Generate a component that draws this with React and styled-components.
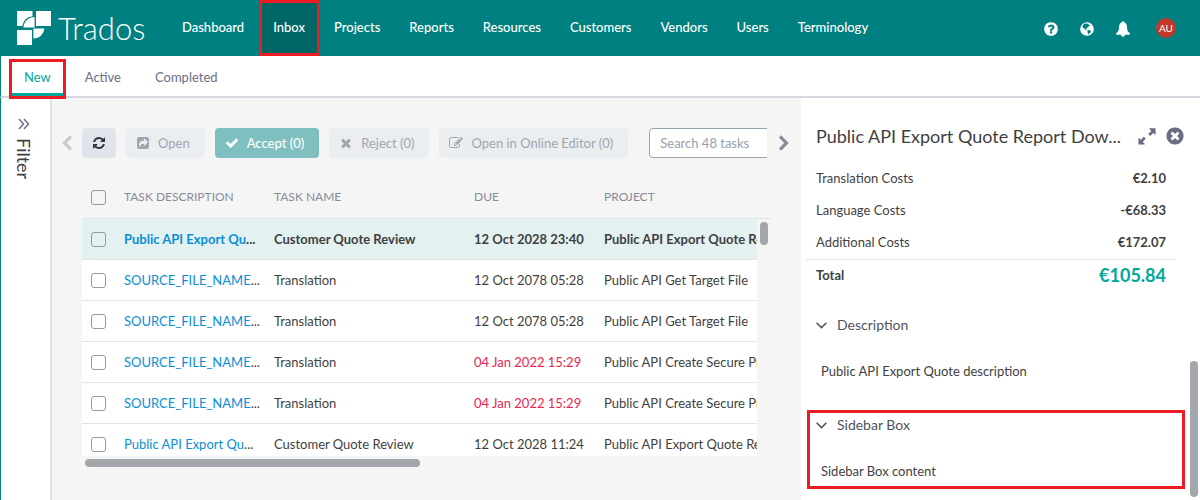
import React from "react";
import styled, { createGlobalStyle, css } from "styled-components";

const color = {
  teal: "#008080",
  tealDark: "#006666",
  accent: "#00a79d",
  mark: "#ed1c24",
  text: "#3f3f41",
  muted: "#6b6d85",
  head: "#868c99",
  line: "#dfe4e8",
  page: "#f5f5f5",
  thumb: "#a3a6aa",
  link: "#0a8fd6",
  late: "#e8264f",
};

const GlobalStyle = createGlobalStyle`
  *, *::before, *::after { box-sizing: border-box; }
  body {
    margin: 0;
    background: #fff;
    color: ${color.text};
    font: 13px/16px Lato, "Liberation Sans", sans-serif;
  }
  button, input { font: inherit; }
  button { margin: 0; padding: 0; border: 0; background: none; color: inherit; cursor: pointer; }
  a { text-decoration: none; }
`;

/* Red frame that calls out a part of the page */
const marked = css`
  position: relative;
  &::after {
    content: "";
    position: absolute;
    inset: ${(p) => p.$frame || "0"};
    border: 3px solid ${color.mark};
    pointer-events: none;
  }
`;

const Page = styled.div`
  display: flex;
  flex-direction: column;
  height: 100vh;
  min-height: 400px;
`;

const Header = styled.header`
  display: flex;
  flex: none;
  height: 56px;
  padding: 0 24px 0 17px;
  background: ${color.teal};
  color: #fff;
`;

const Brand = styled.a`
  display: flex;
  align-items: center;
  gap: 7px;
  width: 151px;
  padding-bottom: 1px;
  color: #fff;
  font-size: 31px;
  font-weight: 300;
  line-height: 32px;
`;

const MainNav = styled.nav`
  display: flex;
  flex: 1;
`;

const NavLink = styled.a`
  display: flex;
  align-items: center;
  padding: 0 15px 2px 14px;
  color: #fff;
  font-weight: 500;
  background: ${(p) => (p.$active ? color.tealDark : "none")};
  ${(p) => p.$active && marked}
`;

const HeaderTools = styled.div`
  display: flex;
  align-items: center;
  gap: 20px;
`;

const IconButton = styled.button`
  display: flex;
  flex: none;
  align-items: center;
  justify-content: center;
  color: ${(p) => p.$color || "inherit"};
`;

const ToolIcon = styled(IconButton)`
  padding-top: 2px;
`;

const Avatar = styled.button`
  width: 20px;
  height: 20px;
  margin-left: 5px;
  border-radius: 50%;
  background: #c0392b;
  color: #fff;
  font-size: 10px;
  line-height: 20px;
`;

const SubNav = styled.nav`
  display: flex;
  flex: none;
  gap: 10px;
  height: 42px;
  padding-left: 11px;
  border-left: 1px solid ${color.teal};
  border-bottom: 2px solid #d6d6de;
`;

const Tab = styled.a`
  display: flex;
  align-items: center;
  padding: 5px 12px 0;
  color: ${(p) => (p.$active ? color.accent : color.muted)};
  border-bottom: 3px solid ${(p) => (p.$active ? color.accent : "transparent")};
  ${(p) => p.$active && marked}
`;

const Body = styled.div`
  display: flex;
  flex: 1;
  min-height: 0;
  border-left: 1px solid ${color.teal};
`;

const FilterRail = styled.aside`
  display: flex;
  flex: none;
  flex-direction: column;
  align-items: center;
  gap: 8px;
  width: 51px;
  padding: 20px 4px 0 0;
  border-right: 2px solid ${color.line};
`;

const FilterLabel = styled.span`
  writing-mode: vertical-rl;
  font-size: 18px;
  line-height: 22px;
`;

const Tasks = styled.main`
  display: flex;
  flex: 1;
  flex-direction: column;
  min-width: 0;
  background: ${color.page};
`;

const Toolbar = styled.div`
  display: flex;
  flex: none;
  margin-top: 30px;
  height: 30px;
`;

const ToolbarEnd = styled(IconButton)`
  width: ${(p) => p.$width};
`;

const ToolbarItems = styled.div`
  display: flex;
  flex: 1;
  gap: 10px;
  min-width: 0;
  overflow: hidden;
`;

const tones = {
  solid: css`background: #dfe5ea; color: #2f3645;`,
  faded: css`background: #eaeef1; color: #a0a5b0;`,
  primary: css`background: #7fbfbf; color: #fff; font-weight: 500;`,
};

const ToolButton = styled.button`
  display: flex;
  flex: none;
  align-items: center;
  justify-content: flex-start;
  gap: 8px;
  padding: 0 ${(p) => (p.$square ? "10px" : "15px 0 10px")};
  border-radius: 4px;
  ${(p) => tones[p.$tone]}
`;

const Search = styled.input`
  flex: none;
  width: 180px;
  margin-left: 11px;
  padding: 0 10px;
  border: 1px solid #98a6b4;
  border-radius: 4px;
  background: #fff;
  color: ${color.text};
  &::placeholder { color: #98a0ad; opacity: 1; }
`;

const TableArea = styled.div`
  position: relative;
  flex: 1;
  min-height: 0;
  margin: 18px 29px 0 30px;
  overflow: hidden;
`;

const Table = styled.table`
  width: 100%;
  table-layout: fixed;
  border-collapse: separate;
  border-spacing: 0;
  white-space: nowrap;
`;

const Col = styled.col`
  width: ${(p) => p.$width};
`;

const HeadCell = styled.th`
  height: 43px;
  padding: 0 0 0 ${(p) => (p.$check ? "9px" : "10px")};
  border-bottom: 1px solid ${color.line};
  color: ${color.head};
  font-size: 12px;
  font-weight: 400;
  text-align: left;
`;

const Row = styled.tr`
  background: ${(p) => (p.$current ? "#e4f1f1" : "#fff")};
  font-weight: ${(p) => (p.$current ? 700 : 400)};
`;

const Cell = styled.td`
  height: 41px;
  padding: 0 0 0 ${(p) => (p.$check ? "9px" : "10px")};
  border-bottom: 1px solid ${color.line};
  color: ${(p) => (p.$late ? color.late : "inherit")};
`;

const TaskLink = styled.a`
  color: ${color.link};
`;

const Check = styled.input.attrs({ type: "checkbox" })`
  display: block;
  appearance: none;
  width: 15px;
  height: 15px;
  margin: 0;
  border: 1px solid #8f9aae;
  border-radius: 3px;
  &:checked { background: ${color.accent}; }
`;

const VerticalTrack = styled.div`
  position: absolute;
  top: 43px;
  right: 0;
  bottom: 0;
  width: 14px;
  padding: 3px;
  background: ${color.page};
`;

const Thumb = styled.div`
  width: ${(p) => p.$width};
  height: ${(p) => p.$height};
  border-radius: 4px;
  background: ${color.thumb};
`;

const HorizontalTrack = styled.div`
  flex: none;
  height: 44px;
  margin: 0 43px 0 30px;
  padding: 3px;
`;

const Details = styled.aside`
  display: flex;
  flex: 0 0 400px;
  min-width: 0;
  border-left: 1px solid ${color.page};
`;

const DetailsContent = styled.div`
  flex: 1;
  min-width: 0;
  padding: 28px 0 0 5px;
`;

const DetailsHeader = styled.div`
  display: flex;
  align-items: center;
  gap: 8px;
  height: 20px;
  padding-left: 10px;
`;

const DetailsTitle = styled.h2`
  flex: 1;
  margin: 0;
  overflow: hidden;
  white-space: nowrap;
  font-size: 18px;
  line-height: 24px;
  font-weight: 400;
`;

const Costs = styled.dl`
  margin: 16px 9px 0 0;
`;

const Cost = styled.div`
  display: flex;
  align-items: center;
  justify-content: space-between;
  height: 32px;
  padding: 0 10px;
  dt, dd { margin: 0; }
  dd { font-weight: 700; }
`;

const Total = styled(Cost)`
  height: 31px;
  border-top: 1px solid #e1e4e5;
  margin-top: 1px;
  dt { font-weight: 700; }
  dd { color: ${color.accent}; font-size: 18px; line-height: 24px; }
`;

const Section = styled.section`
  height: 79px;
  margin-top: 20px;
  padding: 0 10px;
  ${(p) => p.$marked && marked}
  & + & { margin-top: 21px; }
`;

const SectionToggle = styled.button`
  display: flex;
  align-items: center;
  gap: 10px;
  height: 30px;
  color: #50535f;
  font-size: 14px;
`;

const SectionText = styled.p`
  margin: 23px 0 0 5px;
`;

const DetailsTrack = styled.div`
  display: flex;
  flex-direction: column;
  justify-content: flex-end;
  flex: none;
  width: 15px;
  padding: 0 2px 3px 5px;
`;

const paths = {
  help: "M1024 1376v-192q0-14-9-23t-23-9h-192q-14 0-23 9t-9 23v192q0 14 9 23t23 9h192q14 0 23-9t9-23zm256-672q0-88-55.5-163t-138.5-116-170-41q-243 0-371 213-15 24 8 42l132 100q7 6 19 6 16 0 25-12 53-68 86-92 34-24 86-24 48 0 85.5 26t37.5 59q0 38-20 61t-68 45q-63 28-115.5 86.5t-52.5 125.5v36q0 14 9 23t23 9h192q14 0 23-9t9-23q0-19 21.5-49.5t54.5-49.5q32-18 49-28.5t46-35 44.5-48 28-60.5 12.5-81zm384 192q0 209-103 385.5t-279.5 279.5-385.5 103-385.5-103-279.5-279.5-103-385.5 103-385.5 279.5-279.5 385.5-103 385.5 103 279.5 279.5 103 385.5z",
  close: "M1277 1122q0-26-19-45l-181-181 181-181q19-19 19-45 0-27-19-46l-90-90q-19-19-46-19-26 0-45 19l-181 181-181-181q-19-19-45-19-27 0-46 19l-90 90q-19 19-19 46 0 26 19 45l181 181-181 181q-19 19-19 45 0 27 19 46l90 90q19 19 46 19 26 0 45-19l181-181 181 181q19 19 45 19 27 0 46-19l90-90q19-19 19-46zm387-226q0 209-103 385.5t-279.5 279.5-385.5 103-385.5-103-279.5-279.5-103-385.5 103-385.5 279.5-279.5 385.5-103 385.5 103 279.5 279.5 103 385.5z",
  refresh: "M1639 1056q0 5-1 7-64 268-268 434.5t-478 166.5q-146 0-282.5-55t-243.5-157l-129 129q-19 19-45 19t-45-19-19-45v-448q0-26 19-45t45-19h448q26 0 45 19t19 45-19 45l-137 137q71 66 161 102t187 36q134 0 250-65t186-179q11-17 53-117 8-23 30-23h192q13 0 22.5 9.5t9.5 22.5zm25-800v448q0 26-19 45t-45 19h-448q-26 0-45-19t-19-45 19-45l138-138q-148-137-349-137-134 0-250 65t-186 179q-11 17-53 117-8 23-30 23h-199q-13 0-22.5-9.5t-9.5-22.5v-7q65-268 270-434.5t480-166.5q146 0 284 55.5t245 156.5l130-129q19-19 45-19t45 19 19 45z",
  check: "M1671 566q0 40-28 68l-724 724-136 136q-28 28-68 28t-68-28l-136-136-362-362q-28-28-28-68t28-68l136-136q28-28 68-28t68 28l294 295 656-657q28-28 68-28t68 28l136 136q28 28 28 68z",
  times: "M1490 1322q0 40-28 68l-136 136q-28 28-68 28t-68-28l-294-294-294 294q-28 28-68 28t-68-28l-136-136q-28-28-28-68t28-68l294-294-294-294q-28-28-28-68t28-68l136-136q28-28 68-28t68 28l294 294 294-294q28-28 68-28t68 28l136 136q28 28 28 68t-28 68l-294 294 294 294q28 28 28 68z",
  edit: "M888 1184l116-116-152-152-116 116v56h96v96h56zm440-720q-16-16-33 1l-350 350q-17 17-1 33t33-1l350-350q17-17 1-33zm80 594v190q0 119-84.5 203.5t-203.5 84.5h-832q-119 0-203.5-84.5t-84.5-203.5v-832q0-119 84.5-203.5t203.5-84.5h832q63 0 117 25 15 7 18 23 3 17-9 29l-49 49q-14 14-32 8-23-6-45-6h-832q-66 0-113 47t-47 113v832q0 66 47 113t113 47h832q66 0 113-47t47-113v-126q0-13 9-22l64-64q15-15 35-7t20 29zm-96-738l288 288-672 672h-288v-288zm444 132l-92 92-288-288 92-92q28-28 68-28t68 28l152 152q28 28 28 68t-28 68z",
  share: "M416 128H1376A288 288 0 0 1 1664 416V1376A288 288 0 0 1 1376 1664H416A288 288 0 0 1 128 1376V416A288 288 0 0 1 416 128ZM1005 400V592C620 592 384 760 384 1090C384 1230 450 1340 530 1420C560 1440 580 1420 570 1390C520 1120 640 976 1005 976V1168C1005 1225 1070 1245 1110 1210L1490 835Q1530 790 1490 740L1110 358C1070 320 1005 345 1005 400Z",
  bell: "M896 0Q980 0 980 90V150C1240 205 1344 420 1344 700C1344 1060 1430 1230 1700 1408Q1700 1536 1572 1536H1120A224 224 0 0 1 672 1536H220Q92 1536 92 1408C362 1230 448 1060 448 700C448 420 552 205 812 150V90Q812 0 896 0Z",
  globe: "M896 128A768 768 0 1 1 896 1664A768 768 0 1 1 896 128ZM560 330L440 450L400 640L480 780L620 850L690 960L800 1010L860 940L800 860L900 760L1010 700L1090 590L1210 560L1180 440L1060 400L960 280L820 300L700 250ZM1020 1000L930 1100L960 1260L1040 1480L1180 1400L1320 1240L1340 1120L1200 1040Z",
  expand: "M1664 192V740Q1664 800 1610 770L1460 620L1180 900L1000 720L1280 440L1110 270Q1080 192 1150 192ZM128 1664V1116Q128 1056 182 1086L332 1236L612 956L792 1136L512 1416L682 1586Q712 1664 642 1664Z",
};

function Icon({ name, size = 14 }) {
  return (
    <svg width={size} height={size} viewBox="0 0 1792 1792" fill="currentColor" fillRule="evenodd" aria-hidden="true">
      <path d={paths[name]} />
    </svg>
  );
}

function Chevron({ points, width, height, stroke = 2 }) {
  return (
    <svg width={width} height={height} viewBox={`0 0 ${width} ${height}`} fill="none" stroke="currentColor" strokeWidth={stroke} aria-hidden="true">
      {points.map((p) => (
        <polyline key={p} points={p} />
      ))}
    </svg>
  );
}

function Logo() {
  return (
    <svg width="34" height="34" viewBox="0 0 34 34" fill="#fff" aria-hidden="true">
      <path d="M0 0H15.5V5.2A12.4 12.4 0 0 0 5.2 15H0Z" />
      <path d="M19 0H34V15H19Z" />
      <path d="M0 19H15V34H0Z" />
      <path d="M17.6 6V16.6H6.4A11 11 0 0 1 17.6 6Z" />
      <path d="M16.4 17.6H27.4A10.4 10.4 0 0 1 16.4 27.4Z" />
    </svg>
  );
}

const navItems = ["Dashboard", "Inbox", "Projects", "Reports", "Resources", "Customers", "Vendors", "Users", "Terminology"];
const tabs = ["New", "Active", "Completed"];
const tasks = [
  { link: "Public API Export Qu", name: "Customer Quote Review", due: "12 Oct 2028 23:40", project: "Public API Export Quote Report", current: true },
  { link: "SOURCE_FILE_NAME", name: "Translation", due: "12 Oct 2078 05:28", project: "Public API Get Target File" },
  { link: "SOURCE_FILE_NAME", name: "Translation", due: "12 Oct 2078 05:28", project: "Public API Get Target File" },
  { link: "SOURCE_FILE_NAME", name: "Translation", due: "04 Jan 2022 15:29", project: "Public API Create Secure Project", late: true },
  { link: "SOURCE_FILE_NAME", name: "Translation", due: "04 Jan 2022 15:29", project: "Public API Create Secure Project", late: true },
  { link: "Public API Export Qu", name: "Customer Quote Review", due: "12 Oct 2028 11:24", project: "Public API Export Quote Report" },
];
const costs = [
  ["Translation Costs", "€2.10"],
  ["Language Costs", "-€68.33"],
  ["Additional Costs", "€172.07"],
];

function DetailSection({ title, text, marked: isMarked }) {
  return (
    <Section $marked={isMarked} $frame="0 0 0 1px">
      <SectionToggle aria-expanded="true">
        <Chevron width={11} height={7} points={["0.6,0.8 5.5,5.6 10.4,0.8"]} stroke={1.5} />
        {title}
      </SectionToggle>
      <SectionText>{text}</SectionText>
    </Section>
  );
}

export default function App() {
  return (
    <Page>
      <GlobalStyle />
      <Header>
        <Brand href="#home">
          <Logo />
          Trados
        </Brand>
        <MainNav>
          {navItems.map((item) => (
            <NavLink key={item} href={`#${item}`} $active={item === "Inbox"}>
              {item}
            </NavLink>
          ))}
        </MainNav>
        <HeaderTools>
          <ToolIcon aria-label="Help"><Icon name="help" size={16} /></ToolIcon>
          <ToolIcon aria-label="Language"><Icon name="globe" size={16} /></ToolIcon>
          <ToolIcon aria-label="Notifications"><Icon name="bell" size={16} /></ToolIcon>
          <Avatar>AU</Avatar>
        </HeaderTools>
      </Header>

      <SubNav>
        {tabs.map((tab) => (
          <Tab key={tab} href={`#${tab}`} $active={tab === "New"} $frame="3px -3px -6px">
            {tab}
          </Tab>
        ))}
      </SubNav>

      <Body>
        <FilterRail>
          <IconButton $color={color.muted} aria-label="Expand filter">
            <Chevron width={12} height={12} points={["1,1 5.5,6 1,11", "6,1 10.5,6 6,11"]} stroke={1.5} />
          </IconButton>
          <FilterLabel>Filter</FilterLabel>
        </FilterRail>

        <Tasks>
          <Toolbar>
            <ToolbarEnd $width="30px" $color="#cacbd0" aria-label="Scroll left">
              <Chevron width={10} height={16} points={["9,1.5 2.5,8 9,14.5"]} stroke={3.2} />
            </ToolbarEnd>
            <ToolbarItems>
              <ToolButton $tone="solid" $square aria-label="Refresh"><Icon name="refresh" /></ToolButton>
              <ToolButton $tone="faded"><Icon name="share" />Open</ToolButton>
              <ToolButton $tone="primary"><Icon name="check" />Accept (0)</ToolButton>
              <ToolButton $tone="faded"><Icon name="times" />Reject (0)</ToolButton>
              <ToolButton $tone="faded"><Icon name="edit" />Open in Online Editor (0)</ToolButton>
              <Search type="search" aria-label="Search tasks" placeholder="Search 48 tasks" />
            </ToolbarItems>
            <ToolbarEnd $width="33px" $color="#8a8d9c" aria-label="Scroll right">
              <Chevron width={10} height={16} points={["1,1.5 7.5,8 1,14.5"]} stroke={3.2} />
            </ToolbarEnd>
          </Toolbar>

          <TableArea>
            <Table>
              <colgroup>
                <Col $width="32px" />
                <Col $width="150px" />
                <Col $width="200px" />
                <Col $width="130px" />
                <col />
              </colgroup>
              <thead>
                <tr>
                  <HeadCell $check><Check aria-label="Select all tasks" /></HeadCell>
                  <HeadCell>TASK DESCRIPTION</HeadCell>
                  <HeadCell>TASK NAME</HeadCell>
                  <HeadCell>DUE</HeadCell>
                  <HeadCell>PROJECT</HeadCell>
                </tr>
              </thead>
              <tbody>
                {tasks.map((task, i) => (
                  <Row key={i} $current={task.current}>
                    <Cell $check><Check aria-label={`Select task ${i + 1}`} /></Cell>
                    <Cell><TaskLink href="#task">{task.link}</TaskLink>...</Cell>
                    <Cell>{task.name}</Cell>
                    <Cell $late={task.late}>{task.due}</Cell>
                    <Cell>{task.project}</Cell>
                  </Row>
                ))}
              </tbody>
            </Table>
            <VerticalTrack>
              <Thumb $width="8px" $height="23px" />
            </VerticalTrack>
          </TableArea>
          <HorizontalTrack>
            <Thumb $width="50%" $height="8px" />
          </HorizontalTrack>
        </Tasks>

        <Details>
          <DetailsContent>
            <DetailsHeader>
              <DetailsTitle>Public API Export Quote Report Dow...</DetailsTitle>
              <IconButton $color={color.muted} aria-label="Expand"><Icon name="expand" size={20} /></IconButton>
              <IconButton $color={color.muted} aria-label="Close"><Icon name="close" size={20} /></IconButton>
            </DetailsHeader>
            <Costs>
              {costs.map(([label, value]) => (
                <Cost key={label}>
                  <dt>{label}</dt>
                  <dd>{value}</dd>
                </Cost>
              ))}
              <Total>
                <dt>Total</dt>
                <dd>€105.84</dd>
              </Total>
            </Costs>
            <DetailSection title="Description" text="Public API Export Quote description" />
            <DetailSection title="Sidebar Box" text="Sidebar Box content" marked />
          </DetailsContent>
          <DetailsTrack>
            <Thumb $width="8px" $height="136px" />
          </DetailsTrack>
        </Details>
      </Body>
    </Page>
  );
}
